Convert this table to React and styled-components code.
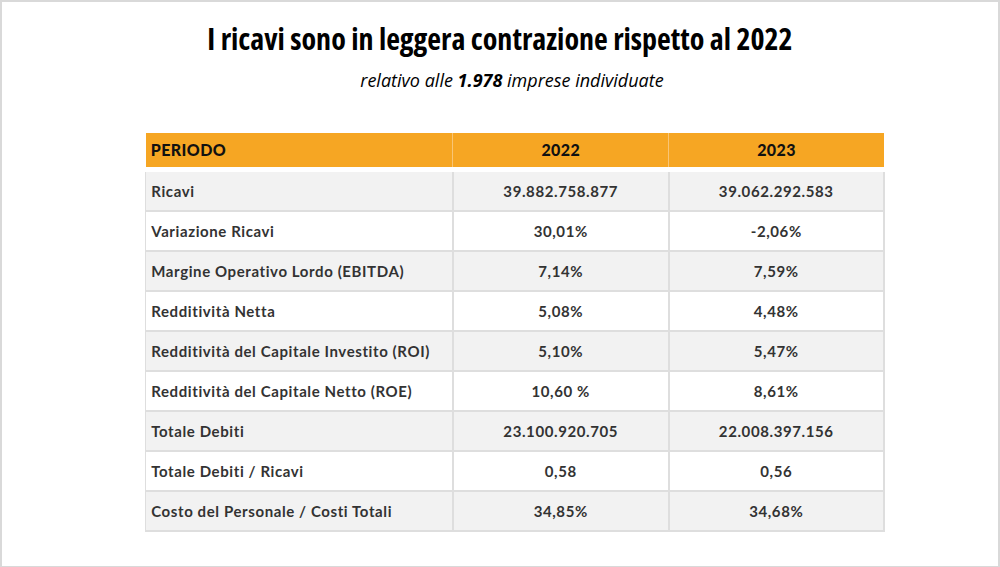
import React from "react"
import styled, { createGlobalStyle } from "styled-components"

const GlobalStyle = createGlobalStyle`
  html, body {
    margin: 0;
    padding: 0;
    background: #ffffff;
  }
`

const rows = [
  ["Ricavi", "39.882.758.877", "39.062.292.583"],
  ["Variazione Ricavi", "30,01%", "-2,06%"],
  ["Margine Operativo Lordo (EBITDA)", "7,14%", "7,59%"],
  ["Redditività Netta", "5,08%", "4,48%"],
  ["Redditività del Capitale Investito (ROI)", "5,10%", "5,47%"],
  ["Redditività del Capitale Netto (ROE)", "10,60 %", "8,61%"],
  ["Totale Debiti", "23.100.920.705", "22.008.397.156"],
  ["Totale Debiti / Ricavi", "0,58", "0,56"],
  ["Costo del Personale / Costi Totali", "34,85%", "34,68%"],
]

const Slide = styled.div`
  box-sizing: border-box;
  width: 1000px;
  height: 567px;
  border: 2px solid #d9d9d9;
  border-bottom-width: 1px;
  background: #fff;
  display: flex;
  flex-direction: column;
  align-items: center;
  padding-top: 19px;
`

const Title = styled.h1`
  margin: 0;
  font-family: "Liberation Sans Narrow", "Open Sans", sans-serif;
  font-stretch: condensed;
  font-size: 30px;
  font-weight: 700;
  color: #000;
  line-height: 36px;
`

const Subtitle = styled.p`
  margin: 12px 0 0 24px;
  font-family: "Liberation Sans Narrow", "Open Sans", sans-serif;
  font-style: italic;
  font-size: 18px;
  line-height: 22px;
  color: #000;

  b {
    font-weight: 700;
  }
`

const Table = styled.table`
  margin-top: 42px;
  margin-left: 30px;
  width: 738px;
  table-layout: fixed;
  border-collapse: collapse;
  font-family: Lato, "Open Sans", sans-serif;
  font-weight: 700;
  color: #333;
`

const HeadCell = styled.th`
  box-sizing: border-box;
  background: #f6a623;
  color: #111;
  height: 36px;
  padding: 0 5px;
  font-size: 16px;
  font-weight: 900;
  letter-spacing: 0.4px;
  text-align: ${p => (p.$left ? "left" : "center")};
  width: ${p => p.$w}px;
  border-left: ${p => (p.$left ? "none" : "1px solid #f9c575")};
  border-bottom: 5px solid #fff;
`

const Row = styled.tr`
  background: ${p => (p.$odd ? "#f2f2f2" : "#ffffff")};
`

const Cell = styled.td`
  height: 38px;
  padding: 0 5px;
  font-size: 15px;
  letter-spacing: 0.6px;
  white-space: nowrap;
  text-align: ${p => (p.$left ? "left" : "center")};
  border: 2px solid #dedede;
  border-left-width: ${p => (p.$left ? "1px" : "2px")};
`

const App = () => {
  return (
    <>
      <GlobalStyle />
      <Slide>
        <Title>I ricavi sono in leggera contrazione rispetto al 2022</Title>
        <Subtitle>
          relativo alle <b>1.978</b> imprese individuate
        </Subtitle>
        <Table>
          <thead>
            <tr>
              <HeadCell $left $w={307}>PERIODO</HeadCell>
              <HeadCell $w={216}>2022</HeadCell>
              <HeadCell $w={215}>2023</HeadCell>
            </tr>
          </thead>
          <tbody>
            {rows.map((r, i) => (
              <Row key={r[0]} $odd={i % 2 === 0}>
                <Cell $left>{r[0]}</Cell>
                <Cell>{r[1]}</Cell>
                <Cell>{r[2]}</Cell>
              </Row>
            ))}
          </tbody>
        </Table>
      </Slide>
    </>
  )
}

export default App
